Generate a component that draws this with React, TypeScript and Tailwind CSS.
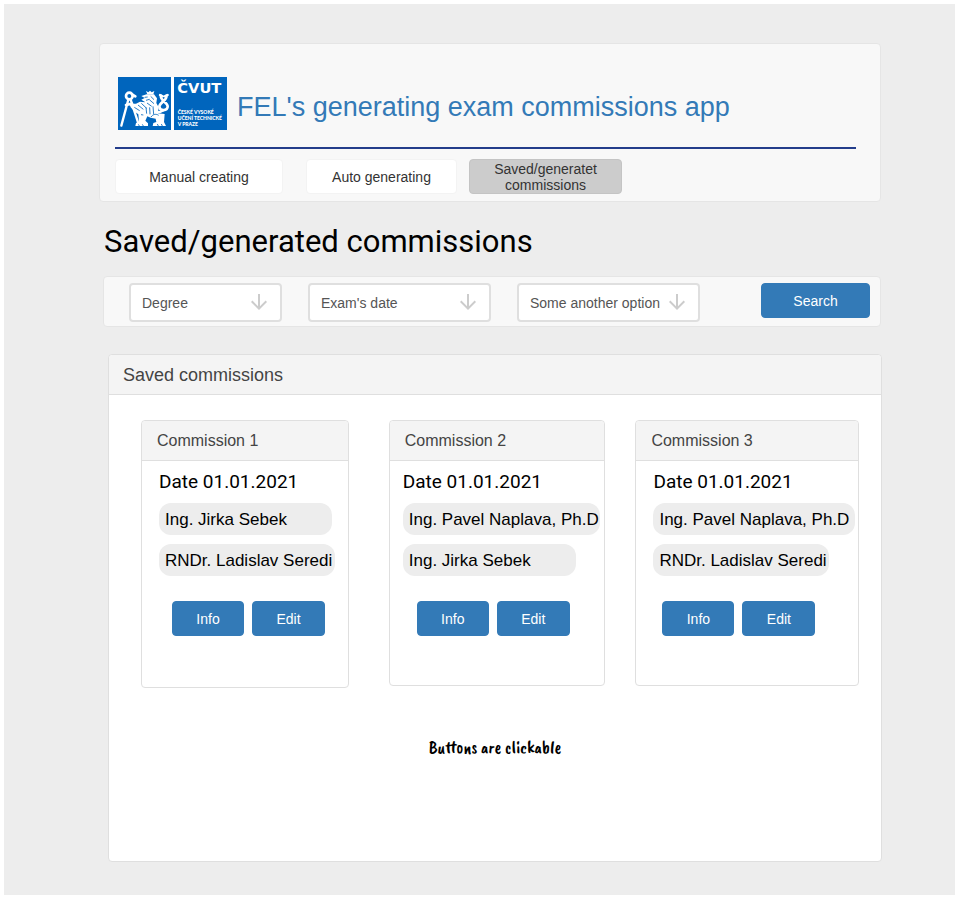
import { MdArrowDownward } from "react-icons/md";

const sans = "font-['Liberation_Sans',Arial,sans-serif]";

type Member = { name: string; width: string };
type Commission = {
  title: string;
  date: string;
  members: Member[];
  card: string;
  body: string;
  actions: string;
};

const commissions: Commission[] = [
  {
    title: "Commission 1",
    date: "Date 01.01.2021",
    members: [
      { name: "Ing. Jirka Sebek", width: "w-[173px]" },
      { name: "RNDr. Ladislav Seredi", width: "w-[176px]" },
    ],
    card: "flex-[208] min-h-[268px] mr-[10px]",
    body: "pl-[17px]",
    actions: "pl-[13px]",
  },
  {
    title: "Commission 2",
    date: "Date 01.01.2021",
    members: [
      { name: "Ing. Pavel Naplava, Ph.D", width: "w-[197px]" },
      { name: "Ing. Jirka Sebek", width: "w-[173px]" },
    ],
    card: "flex-[217] min-h-[266px]",
    body: "pl-[13px]",
    actions: "pl-[14px]",
  },
  {
    title: "Commission 3",
    date: "Date 01.01.2021",
    members: [
      { name: "Ing. Pavel Naplava, Ph.D", width: "w-[202px]" },
      { name: "RNDr. Ladislav Seredi", width: "w-[176px]" },
    ],
    card: "flex-[224] min-h-[266px]",
    body: "pl-[17px]",
    actions: "pl-[9px]",
  },
];

function Logo() {
  return (
    <svg
      viewBox="0 0 327 159"
      className="h-[53px] w-[109px] shrink-0"
      role="img"
      aria-label="ČVUT"
    >
      <rect width="327" height="159" fill="#0065bd" />
      <rect x="159" width="9" height="159" fill="#fff" />
      <g fill="none" stroke="#fff" strokeLinecap="round" strokeLinejoin="round">
        <circle cx="34" cy="57" r="10" strokeWidth="8" />
        <path d="M31 68 L10 146" strokeWidth="7" />
        <path d="M38 68 L60 136" strokeWidth="7" />
        <path d="M42 52 L52 58 M24 84 L42 80" strokeWidth="8" />
        <path d="M129 56 C125 70 149 76 149 88 C149 103 125 103 124 89 C124 76 149 70 145 56" strokeWidth="8" />
        <path d="M126 54 L134 58 M149 54 L140 58" strokeWidth="7" />
        <path d="M116 106 C126 106 132 103 136 100" strokeWidth="7" />
      </g>
      <g fill="#fff">
        <path d="M84 42 L91 46 L96 41 L101 46 L109 42 L106 52 L88 52Z" />
        <path d="M70 57 L86 52 L108 52 L117 64 L115 78 L122 91 L120 109 L140 111 L138 135 L144 147 L104 147 L106 138 L115 135 L113 125 L98 122 L88 118 L82 131 L90 139 L90 147 L52 147 L54 138 L63 134 L61 112 L50 104 L38 91 L34 80 L54 80 L66 74 L82 76 L70 68 L80 63Z" />
      </g>
      <g fill="none" stroke="#0065bd" strokeWidth="2.5">
        <path d="M80 61 L89 60 M84 70 L94 67 M98 58 L108 68 M94 68 L108 80 M87 78 L101 88" />
        <path d="M49 91 L65 101 M60 84 L76 97 M70 79 L86 94 M84 91 L86 110 M95 91 L96 112 M105 88 L107 112" />
        <path d="M99 120 C105 111 115 110 122 115 M69 113 L76 114 M61 142 L64 147 M73 142 L76 147 M118 141 L121 147 M130 141 L133 147" />
      </g>
      <g fill="#fff">
        <text x="178" y="49" fontSize="44" fontWeight="700" className="font-['DejaVu_Sans',sans-serif]">ČVUT</text>
        <g fontSize="15" fontWeight="900" className="font-[Lato,sans-serif]">
          <text x="179" y="112">ČESKÉ VYSOKÉ</text>
          <text x="179" y="130">UČENÍ TECHNICKÉ</text>
          <text x="179" y="148">V PRAZE</text>
        </g>
      </g>
    </svg>
  );
}

function Dropdown({ id, label, width }: { id: string; label: string; width: string }) {
  return (
    <div className={`relative h-[39px] ${width}`}>
      <select
        id={id}
        aria-label={label}
        className="h-full w-full appearance-none rounded border-2 border-[#dfdfdf] bg-white pl-[11px] pr-6 text-sm text-[#555]"
      >
        <option>{label}</option>
      </select>
      <MdArrowDownward
        aria-hidden="true"
        className="pointer-events-none absolute right-[11px] top-[7px] size-6 text-[#ccc]"
      />
    </div>
  );
}

function PrimaryButton({ children, width }: { children: string; width: string }) {
  return (
    <button
      type="button"
      className={`h-[35px] rounded border border-[#337ab7] bg-[#337ab7] text-sm text-white ${width}`}
    >
      {children}
    </button>
  );
}

function CommissionCard({ item }: { item: Commission }) {
  return (
    <article className={`min-w-0 rounded border border-[#dfdfdf] bg-white ${item.card}`}>
      <h3 className="h-10 rounded-t border-b border-[#dfdfdf] bg-[#f4f4f4] pl-[15px] text-base leading-10 text-[#444]">
        {item.title}
      </h3>
      <div className={item.body}>
        <p className="pt-2 font-[Roboto,sans-serif] text-[19px] leading-[26px] text-black">{item.date}</p>
        <ul className="mt-2 flex flex-col gap-[9px]">
          {item.members.map((m) => (
            <li
              key={m.name}
              className={`h-8 whitespace-nowrap rounded-xl bg-[#ededed] pl-[6px] text-[17px] leading-[33px] text-black ${m.width}`}
            >
              {m.name}
            </li>
          ))}
        </ul>
        <div className={`mt-[25px] flex gap-2 ${item.actions}`}>
          <PrimaryButton width="w-[72px]">Info</PrimaryButton>
          <PrimaryButton width="w-[73px]">Edit</PrimaryButton>
        </div>
      </div>
    </article>
  );
}

export default function App() {
  return (
    <div className={`min-h-screen bg-white pb-[5px] pl-1 pr-[5px] pt-1 ${sans}`}>
      <main className="min-h-[891px] bg-[#ededed] pb-8 pl-[95px] pr-[74px] pt-[39px]">
        <header className="rounded border border-[#e5e5e5] bg-[#f8f8f8] pb-[7px] pl-[15px] pr-[24px] pt-[33px]">
          <div className="flex items-center gap-[10px] pl-[3px]">
            <Logo />
            <p className="pt-[6px] text-[27px] leading-8 text-[#337ab7]">
              FEL's generating exam commissions app
            </p>
          </div>
          <hr className="mt-[17px] border-t-2 border-[#233d8b]" />
          <nav className="mt-[10px] flex text-sm leading-4 text-[#333]">
            <button type="button" className="h-[35px] w-[168px] rounded border border-[#f3f3f3] bg-white">
              Manual creating
            </button>
            <button type="button" className="ml-[23px] h-[35px] w-[151px] rounded border border-[#f3f3f3] bg-white">
              Auto generating
            </button>
            <button
              type="button"
              aria-current="page"
              className="ml-3 h-[35px] w-[153px] rounded border border-[#c4c4c4] bg-[#ccc] px-5"
            >
              Saved/generatet commissions
            </button>
          </nav>
        </header>

        <h1 className="mt-5 pl-[5px] font-[Roboto,sans-serif] text-[31px] leading-10 text-black">
          Saved/generated commissions
        </h1>

        <form
          className="ml-1 mt-[14px] flex h-[51px] items-start rounded border border-[#e5e5e5] bg-[#f8f8f8] pl-[25px] pr-[10px] pt-[6px]"
          onSubmit={(e) => e.preventDefault()}
        >
          <div className="flex gap-[26px]">
            <Dropdown id="degree" label="Degree" width="w-[153px]" />
            <Dropdown id="exam-date" label="Exam's date" width="w-[183px]" />
            <Dropdown id="other" label="Some another option" width="w-[183px]" />
          </div>
          <div className="ml-auto">
            <PrimaryButton width="w-[109px]">Search</PrimaryButton>
          </div>
        </form>

        <section className="-mr-px ml-[9px] mt-[27px] min-h-[508px] rounded border border-[#dfdfdf] bg-white">
          <h2 className="h-10 rounded-t border-b border-[#dfdfdf] bg-[#f4f4f4] pl-[14px] text-lg leading-10 text-[#444]">
            Saved commissions
          </h2>
          <div className="flex items-start gap-[30px] pl-8 pr-[22px] pt-[25px]">
            {commissions.map((item) => (
              <CommissionCard key={item.title} item={item} />
            ))}
          </div>
          <p className="mt-[47px] text-center font-['Caveat_Brush','Liberation_Sans_Narrow','Open_Sans',sans-serif] text-lg leading-6 text-black">
            Buttons are clickable
          </p>
        </section>
      </main>
    </div>
  );
}
